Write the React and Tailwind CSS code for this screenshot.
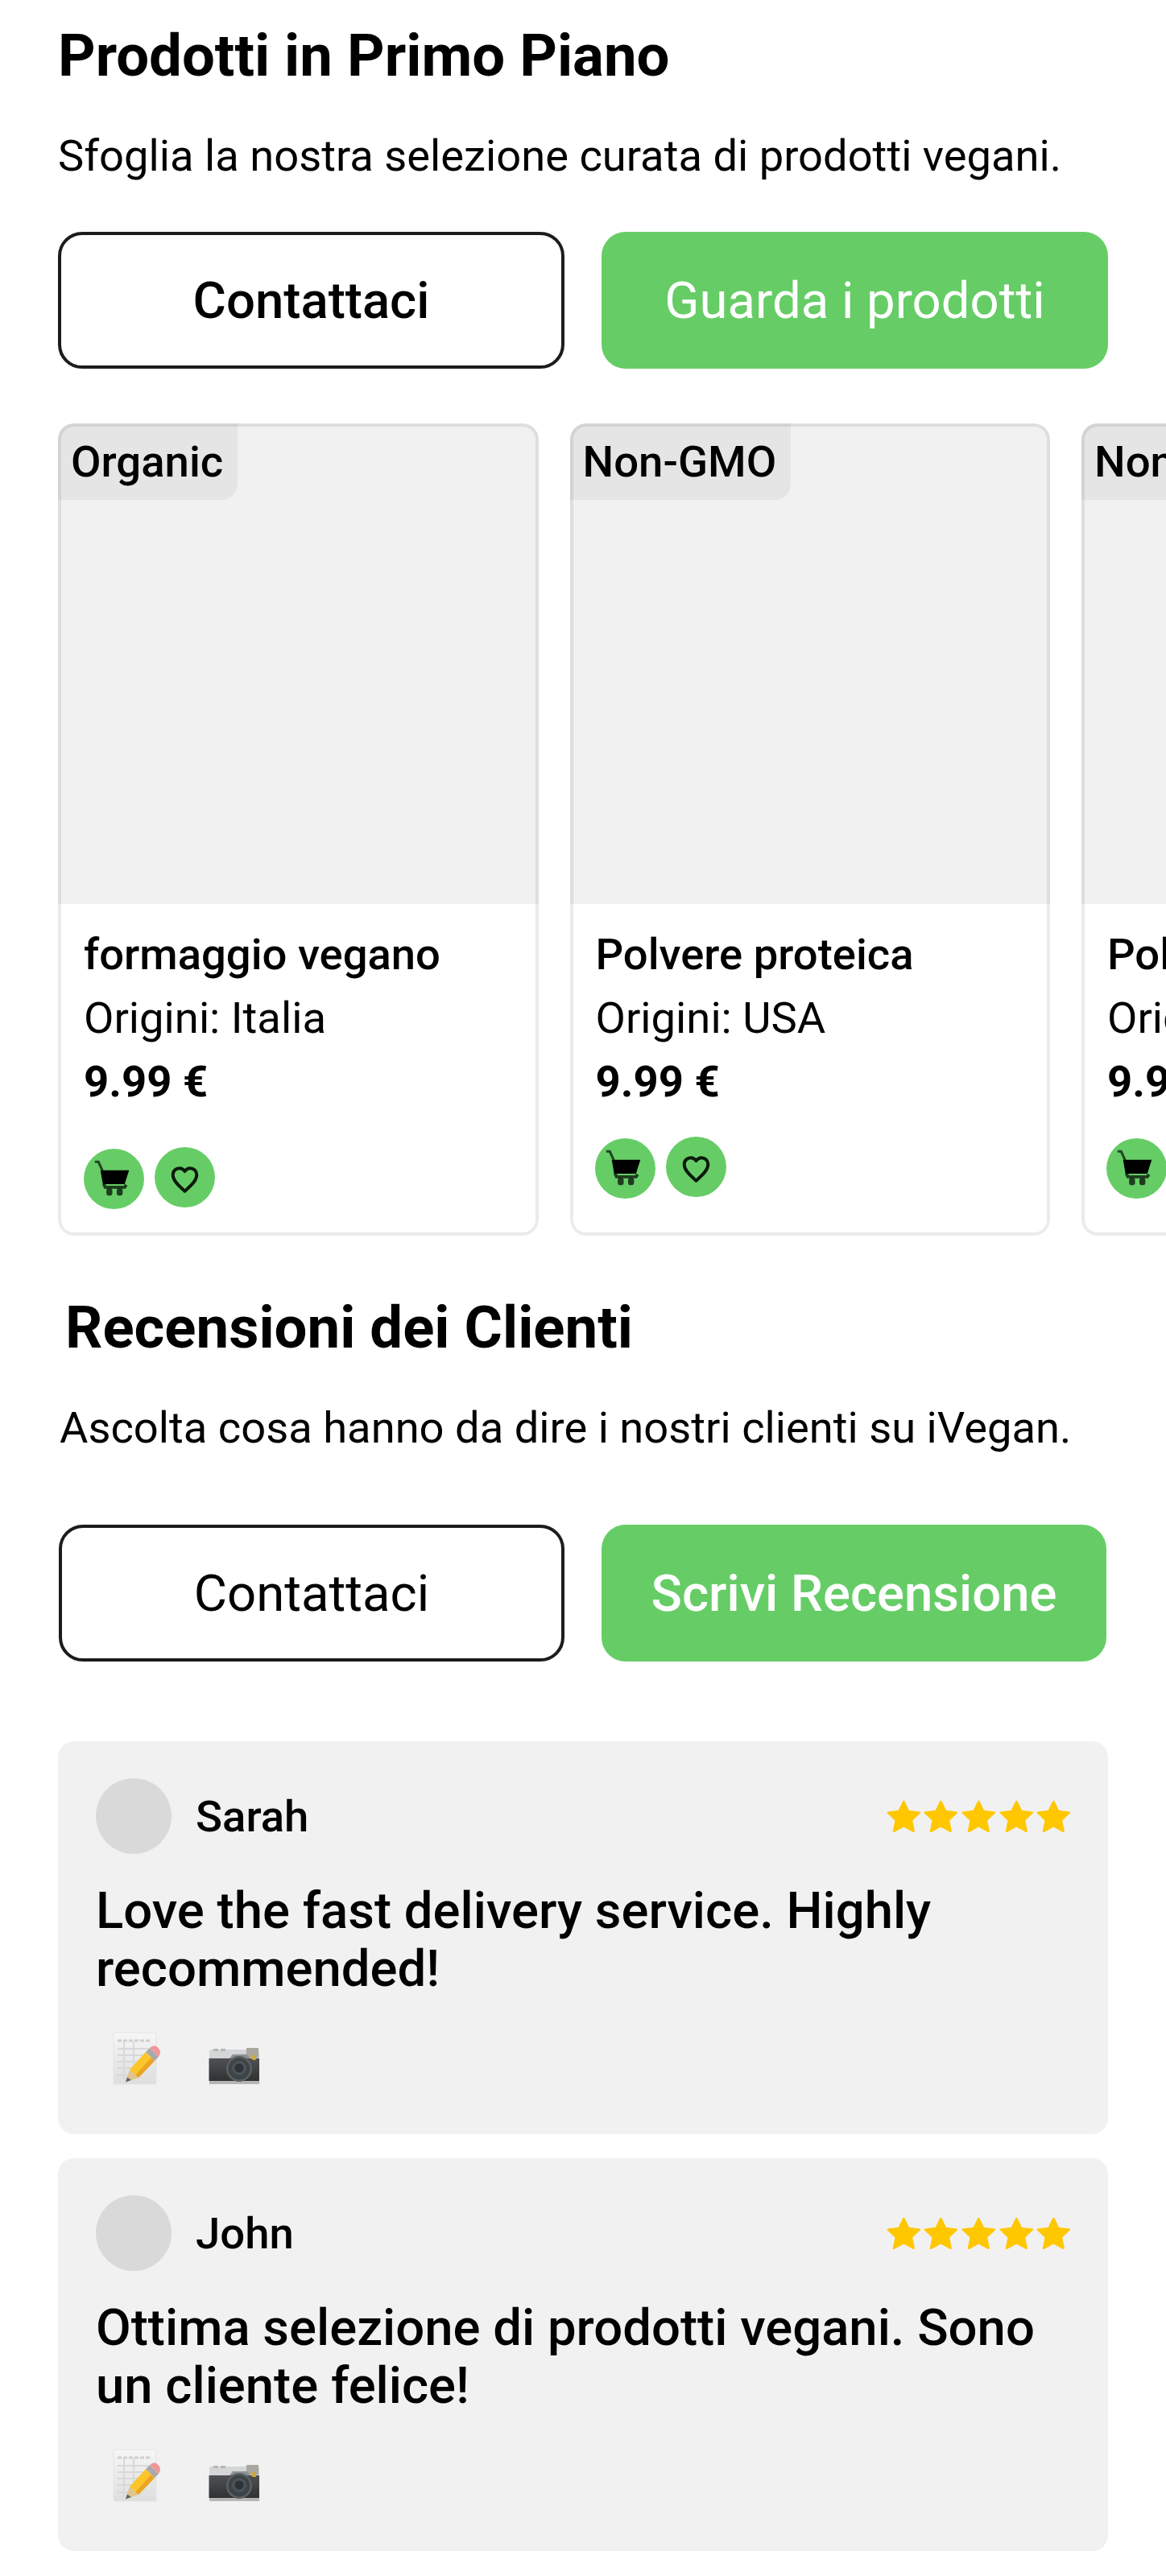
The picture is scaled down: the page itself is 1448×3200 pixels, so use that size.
const products = [
  { badge: "Organic", name: "formaggio vegano", origin: "Origini: Italia", price: "9.99 €", actions: "mt-[42px]" },
  { badge: "Non-GMO", name: "Polvere proteica", origin: "Origini: USA", price: "9.99 €", actions: "mt-[29px] -ml-px" },
  { badge: "Non-GMO", name: "Polvere proteica", origin: "Origini: USA", price: "9.99 €", actions: "mt-[29px] -ml-px" },
];

const reviews = [
  { name: "Sarah", lines: ["Love the fast delivery service. Highly", "recommended!"] },
  { name: "John", lines: ["Ottima selezione di prodotti vegani. Sono", "un cliente felice!"] },
];

function CartIcon() {
  return (
    <svg viewBox="0 0 76 76" className="size-[75px]" fill="none" stroke="#000">
      <path d="M14 16.500h4.500l5 11" strokeWidth="3.200" opacity=".65" />
      <path d="M21 27h36l-5.500 17.500H24z" fill="#000" stroke="none" />
      <path d="M25 44l2 4.500h24.500l2-3" strokeWidth="4" opacity=".7" />
      <rect x="28.500" y="50" width="7.500" height="9" rx="2.500" fill="#000" stroke="none" opacity=".7" />
      <rect x="41.500" y="50" width="7.500" height="9" rx="2.500" fill="#000" stroke="none" opacity=".7" />
    </svg>
  );
}

function HeartIcon() {
  return (
    <svg viewBox="0 0 76 76" className="size-[75px]" fill="none" stroke="#0b1a0b" strokeWidth="4" strokeLinejoin="round">
      <path d="M38 55.500C32 50 23 43 23 35c0-5 3.800-8.500 8.300-8.500 2.800 0 5.200 1.500 6.700 4 1.500-2.500 3.900-4 6.700-4 4.500 0 8.300 3.500 8.300 8.500C53 43 44 50 38 55.500z" />
    </svg>
  );
}

function Star() {
  return (
    <svg viewBox="0 0 46 44" className="h-[44px] w-[46.700px]" fill="#ffc700" stroke="#ffc700" strokeWidth="2.500" strokeLinejoin="round">
      <path d="M23 3l5.900 12 13.600 1.700-10 9.400 2.800 13.700L23 33.200 10.700 39.800l2.800-13.700-10-9.400L17.100 15z" />
    </svg>
  );
}

function NoteIcon() {
  return (
    <svg viewBox="0 0 60 66" className="h-[66px] w-[60px]">
      <defs>
        <linearGradient id="paper" x1="0" y1="0" x2="0" y2="1">
          <stop offset="0" stopColor="#f6f6f6" />
          <stop offset="1" stopColor="#dedede" />
        </linearGradient>
      </defs>
      <rect x="1" y="1" width="53" height="64" rx="1.500" fill="url(#paper)" stroke="#e4e4e4" />
      <path d="M6 11h42" stroke="#cfcfcf" strokeWidth="3" strokeDasharray="5 2" />
      <path d="M6 21h38M6 29h38M6 37h32M6 45h26M6 54h18M14 12v48M26 12v30" stroke="#d8d8dc" strokeWidth="2" />
      <path d="M21 47L41 25l11 11-20 21z" fill="#fcc62b" />
      <path d="M28 54L48 32l4 4-20 21z" fill="#eaa522" />
      <path d="M21 47l-5 15 16-5z" fill="#dfc48e" />
      <path d="M18 56.500L16 62.500l7-2.500z" fill="#66605a" />
      <path d="M41 25l5-5 11 11-5 5z" fill="#a9a9ab" />
      <path d="M46 20l3-2q4-2 7.500 2t2 8L57 31z" fill="#f19698" />
    </svg>
  );
}

function CameraIcon() {
  return (
    <svg viewBox="0 0 64 46" className="h-[46px] w-[64px]">
      <defs>
        <linearGradient id="cameraBody" x1="0" y1="0" x2="0" y2="1">
          <stop offset="0" stopColor="#505152" />
          <stop offset="1" stopColor="#303132" />
        </linearGradient>
      </defs>
      <rect x="1" y="2" width="62" height="43" rx="2" fill="#d3d5d6" />
      <path d="M6 1h6v3H6zM15 1h6v3h-6z" fill="#b4b6b7" />
      <path d="M47 0h15v12H47z" fill="#aaa79e" />
      <rect x="0.500" y="13" width="62.500" height="28" fill="url(#cameraBody)" />
      <rect x="1" y="41" width="62" height="4" fill="#b5b5b6" />
      <path d="M26 13l4-5h18l4 5z" fill="#8e9293" />
      <circle cx="38" cy="26" r="16" fill="#5b6063" />
      <circle cx="38" cy="26" r="13.500" fill="#3e4347" />
      <circle cx="38" cy="25" r="9" fill="#4c5358" />
      <circle cx="38" cy="25" r="5.500" fill="#2d3236" />
      <rect x="54" y="9" width="5" height="6" rx="1" fill="#c9a93b" />
    </svg>
  );
}

function ProductCard({ badge, name, origin, price, actions }) {
  return (
    <article className="relative h-[1009px] w-[596.500px] shrink-0 overflow-hidden rounded-[20px] bg-white">
      <div className="flex h-[597px] items-start bg-[#f1f1f1]">
        <span className="rounded-br-[20px] bg-[#e5e5e5] pr-[18px] pl-[16px] text-[54.500px] leading-[95px] font-medium">{badge}</span>
      </div>
      <div className="pt-[23px] pl-[32px] text-[54.400px] leading-[79px]">
        <h3 className="font-medium">{name}</h3>
        <p>{origin}</p>
        <p className="font-bold">{price}</p>
        <div className={`flex gap-[13px] ${actions}`}>
          <button className="mt-[2px] size-[75px] rounded-full bg-[#66cd66]"><CartIcon /></button>
          <button className="size-[75px] rounded-full bg-[#66cd66]"><HeartIcon /></button>
        </div>
      </div>
      <div className="pointer-events-none absolute inset-0 rounded-[20px] border-4 border-black/8" />
    </article>
  );
}

function ReviewCard({ name, lines }) {
  return (
    <article className="h-[488px] rounded-[20px] bg-[#f1f1f1] pt-[46px] pr-[44px] pl-[47px]">
      <header className="flex h-[94px] items-center">
        <div className="size-[94px] rounded-full bg-[#d9d9d9]" />
        <span className="ml-[30px] text-[54.500px] leading-[64px] font-medium">{name}</span>
        <div className="ml-auto flex pt-[2px]">
          {[0, 1, 2, 3, 4].map((i) => <Star key={i} />)}
        </div>
      </header>
      <p className="mt-[34px] text-[63.450px] leading-[72px] font-medium whitespace-nowrap">
        {lines[0]}<br />{lines[1]}
      </p>
      <div className="mt-[43px] ml-[21px] flex items-end gap-[59px]">
        <NoteIcon />
        <CameraIcon />
      </div>
    </article>
  );
}

const buttonBase = "flex h-[170px] items-center justify-center rounded-[30px] pt-[2px] text-[63.450px] whitespace-nowrap";

export default function App() {
  return (
    <main className="h-[3200px] w-[1448px] overflow-hidden bg-white pt-[30px] pl-[72px] font-[Roboto,sans-serif] text-black">
      <section>
        <h2 className="text-[72.500px] leading-[80px] font-bold">Prodotti in Primo Piano</h2>
        <p className="mt-[52px] text-[54.300px] leading-[64px]">Sfoglia la nostra selezione curata di prodotti vegani.</p>
        <div className="mt-[62px] flex gap-[46px]">
          <button className={`${buttonBase} w-[629px] border-4 border-[#1c1c1c] font-medium`}>Contattaci</button>
          <button className={`${buttonBase} w-[629px] bg-[#66cd66] text-white`}>Guarda i prodotti</button>
        </div>
        <div className="mt-[68px] flex gap-[39px]">
          {products.map((p, i) => <ProductCard key={i} {...p} />)}
        </div>
      </section>
      <section className="mt-[75px]">
        <h2 className="ml-[9px] text-[72.500px] leading-[80px] font-bold">Recensioni dei Clienti</h2>
        <p className="mt-[52px] ml-[2px] text-[54.300px] leading-[64px]">Ascolta cosa hanno da dire i nostri clienti su iVegan.</p>
        <div className="mt-[88px] ml-px flex gap-[46px]">
          <button className={`${buttonBase} w-[628px] border-4 border-[#1c1c1c]`}>Contattaci</button>
          <button className={`${buttonBase} w-[627px] bg-[#66cd66] font-medium text-white`}>Scrivi Recensione</button>
        </div>
        <div className="mt-[99px] flex w-[1304px] flex-col gap-[30px]">
          {reviews.map((r) => <ReviewCard key={r.name} {...r} />)}
        </div>
      </section>
    </main>
  );
}
